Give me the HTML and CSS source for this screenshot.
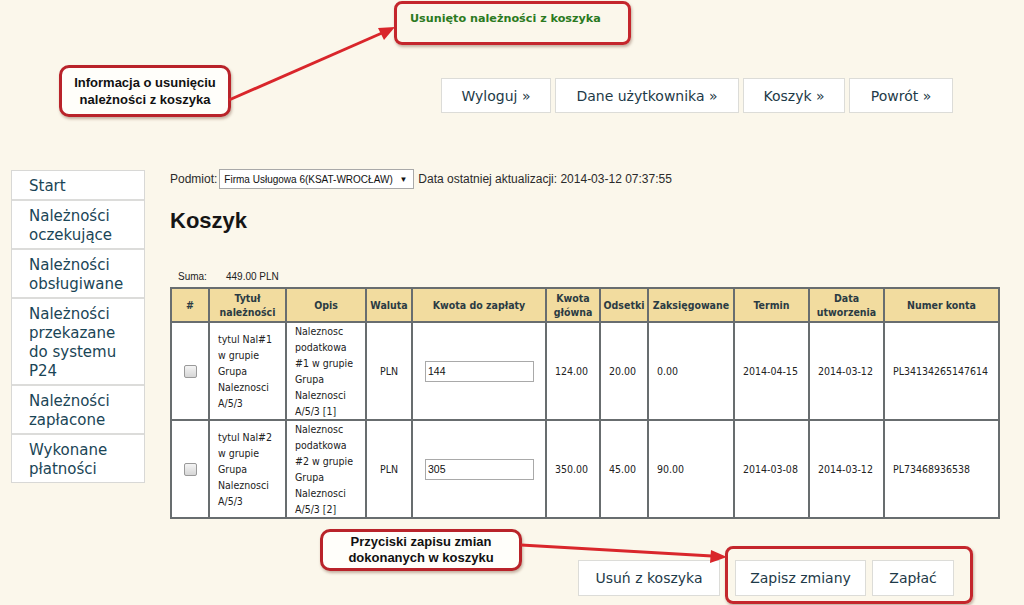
FILE: index.html
```html
<!DOCTYPE html>
<html lang="pl">
<head>
  <meta charset="UTF-8">
  <meta name="viewport" content="width=device-width, initial-scale=1.0">
  <title>Koszyk</title>
  <link rel="stylesheet" href="styles.css">
</head>
<body>
  <!-- Top: message + navigation -->
  <header class="top">
    <div class="msg-row">
      <div class="msg">Usunięto należności z koszyka</div>
    </div>
    <nav class="topnav">
      <a class="btn btn-wyloguj" href="#">Wyloguj »</a>
      <a class="btn btn-dane" href="#">Dane użytkownika »</a>
      <a class="btn btn-koszyk" href="#">Koszyk »</a>
      <a class="btn btn-powrot" href="#">Powrót »</a>
    </nav>
  </header>

  <div class="layout">
    <!-- Left menu -->
    <aside class="sidebar">
      <a class="side-item" href="#">Start</a>
      <a class="side-item" href="#">Należności oczekujące</a>
      <a class="side-item" href="#">Należności obsługiwane</a>
      <a class="side-item" href="#">Należności przekazane do systemu P24</a>
      <a class="side-item" href="#">Należności zapłacone</a>
      <a class="side-item" href="#">Wykonane płatności</a>
    </aside>

    <!-- Basket -->
    <main class="content">
      <div class="filter">
        <span>Podmiot:</span>
        <div class="select">
          <span>Firma Usługowa 6(KSAT-WROCŁAW)</span>
          <span class="caret">▼</span>
        </div>
        <span>Data ostatniej aktualizacji: 2014-03-12 07:37:55</span>
      </div>

      <h1>Koszyk</h1>

      <div class="suma"><span class="suma-label">Suma:</span><span>449.00 PLN</span></div>

      <table class="basket">
        <thead>
          <tr>
            <th class="c-check">#</th>
            <th class="c-tytul">Tytuł należności</th>
            <th class="c-opis">Opis</th>
            <th class="c-waluta">Waluta</th>
            <th class="c-kwota">Kwota do zapłaty</th>
            <th class="c-glowna">Kwota główna</th>
            <th class="c-odsetki">Odsetki</th>
            <th class="c-zaks">Zaksięgowane</th>
            <th class="c-termin">Termin</th>
            <th class="c-data">Data utworzenia</th>
            <th class="c-konto">Numer konta</th>
          </tr>
        </thead>
        <tbody>
          <tr>
            <td class="center"><input type="checkbox" class="check"></td>
            <td>tytul Nal#1 w grupie Grupa Naleznosci A/5/3</td>
            <td>Naleznosc podatkowa #1 w grupie Grupa Naleznosci A/5/3 [1]</td>
            <td class="center">PLN</td>
            <td><input type="text" class="amount" value="144"></td>
            <td>124.00</td>
            <td>20.00</td>
            <td>0.00</td>
            <td>2014-04-15</td>
            <td>2014-03-12</td>
            <td>PL34134265147614</td>
          </tr>
          <tr>
            <td class="center"><input type="checkbox" class="check"></td>
            <td>tytul Nal#2 w grupie Grupa Naleznosci A/5/3</td>
            <td>Naleznosc podatkowa #2 w grupie Grupa Naleznosci A/5/3 [2]</td>
            <td class="center">PLN</td>
            <td><input type="text" class="amount" value="305"></td>
            <td>350.00</td>
            <td>45.00</td>
            <td>90.00</td>
            <td>2014-03-08</td>
            <td>2014-03-12</td>
            <td>PL73468936538</td>
          </tr>
        </tbody>
      </table>

      <div class="actions">
        <a class="btn btn-usun" href="#">Usuń z koszyka</a>
        <a class="btn btn-zapisz" href="#">Zapisz zmiany</a>
        <a class="btn btn-zaplac" href="#">Zapłać</a>
      </div>
    </main>
  </div>

  <!-- Annotations drawn over the screenshot -->
  <div class="note note-info">Informacja o usunięciu<br>należności z koszyka</div>
  <div class="note note-save">Przyciski zapisu zmian<br>dokonanych w koszyku</div>
  <div class="frame frame-save"></div>
  <svg class="arrows" width="1024" height="605" viewBox="0 0 1024 605">
    <line x1="229" y1="100" x2="382" y2="33" stroke="#d9262b" stroke-width="3"/>
    <polygon points="395,27 378,28 384,40" fill="#d9262b"/>
    <line x1="521" y1="545" x2="712" y2="556" stroke="#d9262b" stroke-width="3"/>
    <polygon points="727,557 711,550 710,563" fill="#d9262b"/>
  </svg>
</body>
</html>
```

FILE: styles.css
```css
/* General */
* {
  margin: 0;
  padding: 0;
  box-sizing: border-box;
}

body {
  font-family: "DejaVu Sans", Verdana, sans-serif;
  background-color: #fbf7eb;
  width: 1024px;
  height: 605px;
  overflow: hidden;
  position: relative;
  color: #222;
}

a {
  text-decoration: none;
}

/* Top */
.msg-row {
  padding: 1px 0 0 394px;
}

.msg {
  width: 237px;
  height: 44px;
  border: 3px solid #c4262c;
  border-radius: 8px;
  box-shadow: 1px 2px 3px rgba(90, 40, 20, 0.35);
  padding: 8px 0 0 13px;
  font-size: 11.2px;
  font-weight: bold;
  color: #2b7a1f;
}

.topnav {
  display: flex;
  justify-content: flex-end;
  gap: 4px;
  padding-right: 71px;
  margin-top: 33px;
}

.btn {
  display: flex;
  align-items: center;
  justify-content: center;
  height: 35px;
  background: #fff;
  border: 1px solid #dcdcd8;
  font-size: 14px;
  color: #1e3a48;
}

.btn-wyloguj { width: 110px; }
.btn-dane { width: 184px; }
.btn-koszyk { width: 102px; }
.btn-powrot { width: 104px; }

/* Layout */
.layout {
  display: flex;
  align-items: flex-start;
  margin-top: 56px;
}

.sidebar {
  width: 134px;
  margin: 1px 0 0 11px;
  background: #fff;
  border: 1px solid #d8d8d6;
  display: flex;
  flex-direction: column;
}

.side-item {
  padding: 6px 10px 3px 17px;
  font-size: 15px;
  line-height: 19px;
  color: #1a4556;
  border-bottom: 2px solid #dcdcda;
}

.side-item:last-child {
  border-bottom: none;
}

.content {
  width: 828px;
  margin-left: 25px;
}

/* Filter */
.filter {
  display: flex;
  align-items: center;
  gap: 2px;
  height: 20px;
  font-family: "Liberation Sans", Arial, sans-serif;
  font-size: 12px;
  color: #2a2a2a;
}

.select {
  display: flex;
  align-items: center;
  justify-content: space-between;
  width: 195px;
  height: 20px;
  padding: 0 6px 0 4px;
  margin-right: 2px;
  background: #fff;
  border: 1px solid #a9a9a9;
  font-size: 10px;
  color: #111;
}

.caret {
  font-size: 8px;
}

h1 {
  margin-top: 19px;
  font-family: "Liberation Sans", Arial, sans-serif;
  font-size: 22px;
  line-height: 26px;
  color: #151515;
}

.suma {
  display: flex;
  margin: 36px 0 3px 8px;
  font-family: "Liberation Sans", Arial, sans-serif;
  font-size: 10px;
  line-height: 14px;
  color: #222;
}

.suma-label {
  width: 48px;
}

/* Table */
.basket {
  width: 828px;
  table-layout: fixed;
  border-collapse: collapse;
  background: #fff;
  font-family: "DejaVu Sans Condensed", "DejaVu Sans", sans-serif;
  font-size: 10.5px;
  line-height: 16px;
  color: #222;
}

.basket th,
.basket td {
  border: 2px solid #686d6f;
}

.basket th {
  height: 34px;
  background: #f2dc9f;
  font-weight: bold;
  color: #2b3b43;
  line-height: 14px;
  padding: 0 2px;
}

.basket td {
  padding: 0 8px;
  vertical-align: middle;
}

.basket tbody tr:first-child td { height: 98px; }
.basket tbody tr:last-child td { height: 97px; }

.basket td.center {
  text-align: center;
}

.c-check { width: 38px; }
.c-tytul { width: 77px; }
.c-opis { width: 80px; }
.c-waluta { width: 46px; }
.c-kwota { width: 134px; }
.c-glowna { width: 54px; }
.c-odsetki { width: 48px; }
.c-zaks { width: 86px; }
.c-termin { width: 75px; }
.c-data { width: 75px; }
.c-konto { width: 115px; }

.check {
  appearance: none;
  display: block;
  margin: 0 auto;
  width: 13px;
  height: 13px;
  border: 1px solid #9a9a9a;
  border-radius: 2px;
  background: linear-gradient(#f4f4f4, #d6d6d6);
}

.amount {
  width: 109px;
  height: 21px;
  margin-left: 4px;
  padding: 0 2px;
  border: 1px solid #a9a9a9;
  font-family: "Liberation Sans", Arial, sans-serif;
  font-size: 10.5px;
  color: #111;
}

/* Bottom buttons */
.actions {
  display: flex;
  justify-content: flex-end;
  padding-right: 44px;
  margin-top: 41px;
}

.btn-usun { width: 142px; height: 36px; margin-right: 15px; }
.btn-zapisz { width: 131px; height: 36px; margin-right: 6px; }
.btn-zaplac { width: 82px; height: 36px; }

/* Annotations */
.note {
  position: absolute;
  display: flex;
  align-items: center;
  justify-content: center;
  text-align: center;
  background: #fffefa;
  border: 3px solid #b9232a;
  border-radius: 10px;
  box-shadow: 1px 2px 3px rgba(90, 40, 20, 0.35);
  font-family: "Liberation Sans Narrow", "Liberation Sans", Arial, sans-serif;
  font-stretch: condensed;
  font-weight: bold;
  font-size: 13px;
  line-height: 17px;
  color: #111;
}

.note-info {
  left: 59px;
  top: 65px;
  width: 172px;
  height: 52px;
}

.note-save {
  left: 320px;
  top: 529px;
  width: 202px;
  height: 42px;
  line-height: 16px;
}

.frame {
  position: absolute;
  border: 3px solid #c4262c;
  border-radius: 8px;
  box-shadow: 1px 2px 3px rgba(90, 40, 20, 0.35);
}

.frame-save {
  left: 725px;
  top: 546px;
  width: 248px;
  height: 58px;
}

.arrows {
  position: absolute;
  left: 0;
  top: 0;
  pointer-events: none;
}
```
